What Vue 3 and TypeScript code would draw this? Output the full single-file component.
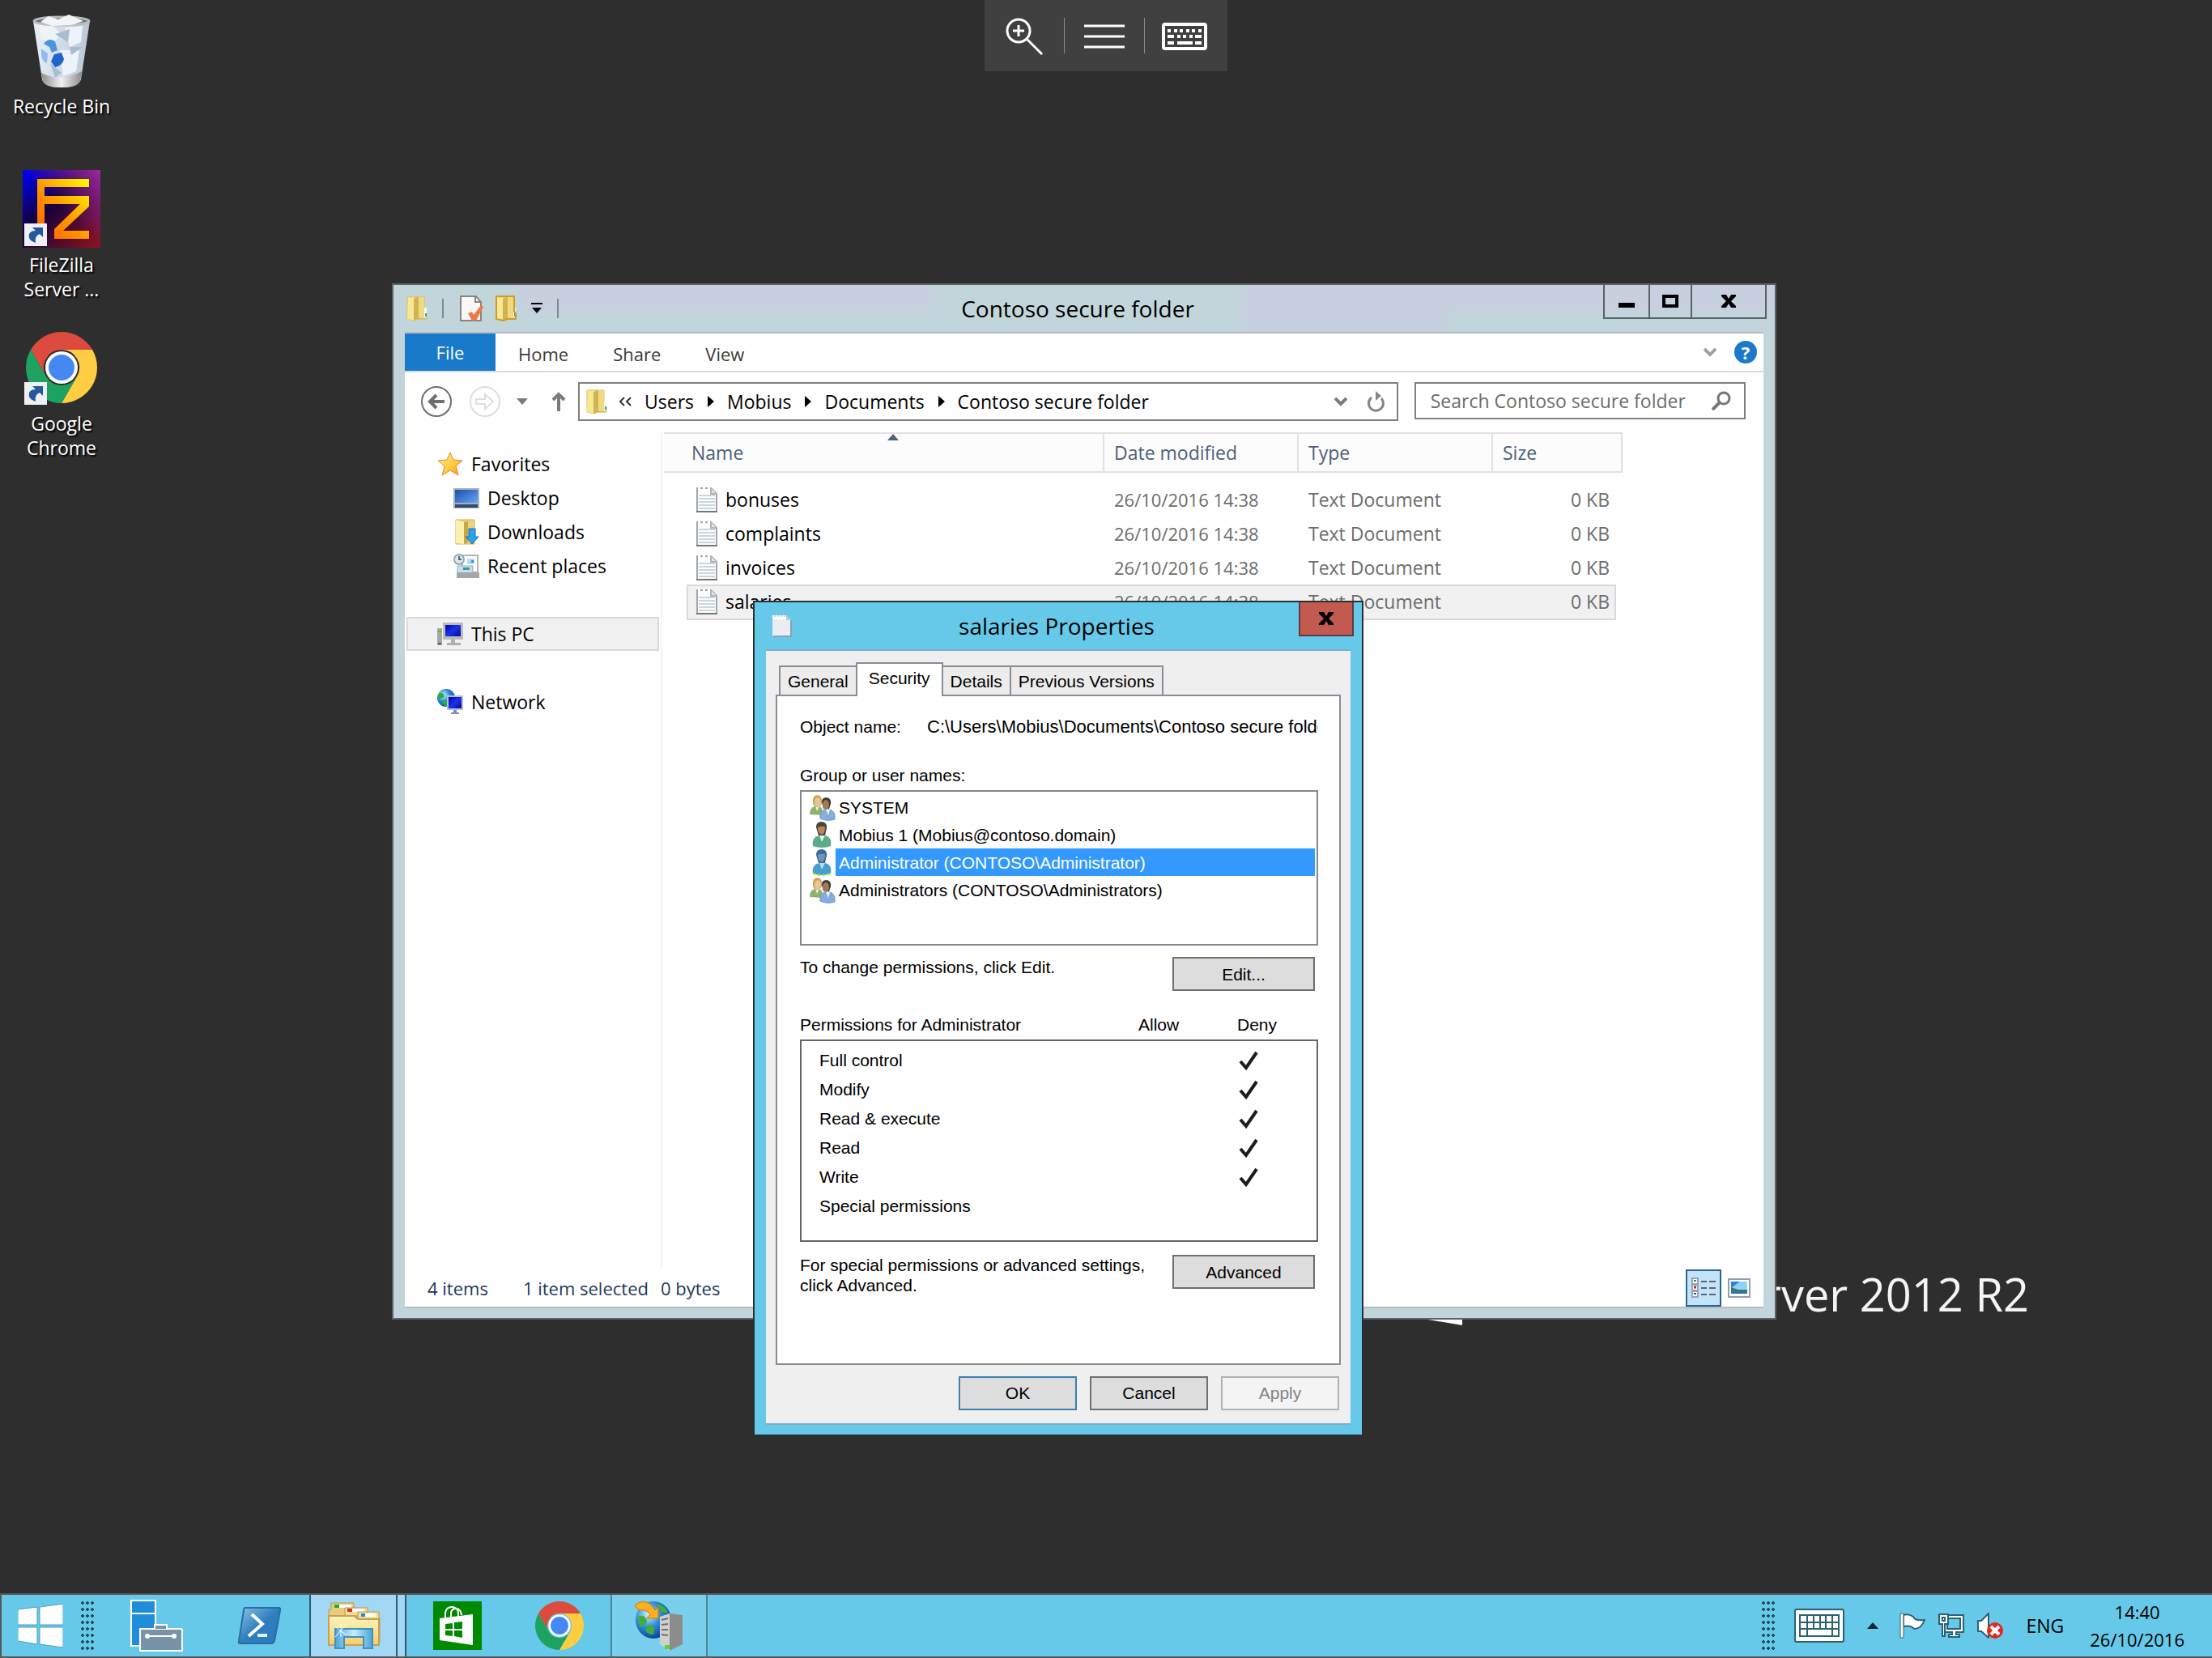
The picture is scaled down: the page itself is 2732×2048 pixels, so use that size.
<script setup lang="ts">
import { ref } from 'vue'

interface Shortcut { icon: string; lines: string[]; link: boolean }
interface NavItem { icon: string; label: string; child?: boolean; gap?: boolean; current?: boolean }
interface FileRow { name: string; date: string; type: string; size: string }
interface Principal { icon: string; name: string }
interface Permission { name: string; deny: boolean }

const shortcuts: Shortcut[] = [
  { icon: 'bin', lines: ['Recycle Bin'], link: false },
  { icon: 'filezilla', lines: ['FileZilla', 'Server ...'], link: true },
  { icon: 'chrome', lines: ['Google', 'Chrome'], link: true },
]

const crumbs = ['Users', 'Mobius', 'Documents', 'Contoso secure folder']

const nav: NavItem[] = [
  { icon: 'star', label: 'Favorites' },
  { icon: 'desktop', label: 'Desktop', child: true },
  { icon: 'downloads', label: 'Downloads', child: true },
  { icon: 'recent', label: 'Recent places', child: true },
  { icon: 'pc', label: 'This PC', gap: true, current: true },
  { icon: 'network', label: 'Network', gap: true },
]

const files: FileRow[] = ['bonuses', 'complaints', 'invoices', 'salaries'].map((name) => ({
  name,
  date: '26/10/2016 14:38',
  type: 'Text Document',
  size: '0 KB',
}))
const selectedFile = ref('salaries')

const tabs = ['General', 'Security', 'Details', 'Previous Versions']
const activeTab = ref('Security')

const principals: Principal[] = [
  { icon: 'group', name: 'SYSTEM' },
  { icon: 'user', name: 'Mobius 1 (Mobius@contoso.domain)' },
  { icon: 'user-selected', name: 'Administrator (CONTOSO\\Administrator)' },
  { icon: 'group', name: 'Administrators (CONTOSO\\Administrators)' },
]
const activePrincipal = ref(2)

const permissions: Permission[] = [
  { name: 'Full control', deny: true },
  { name: 'Modify', deny: true },
  { name: 'Read & execute', deny: true },
  { name: 'Read', deny: true },
  { name: 'Write', deny: true },
  { name: 'Special permissions', deny: false },
]

const objectPath = 'C:\\Users\\Mobius\\Documents\\Contoso secure folder\\salaries.txt'
const query = ref('')
</script>

<template>
  <div class="desktop">
    <svg class="sprite" aria-hidden="true">
      <defs>
        <linearGradient id="g-fold" x1="0" x2="1" y1="0" y2="0">
          <stop offset="0" stop-color="#f3e07c" /><stop offset=".3" stop-color="#fdf3b0" />
          <stop offset=".55" stop-color="#c9ac4b" /><stop offset="1" stop-color="#e6c95c" />
        </linearGradient>
        <linearGradient id="g-fz" x1="0" x2="1" y1="0" y2="1">
          <stop offset="0" stop-color="#0000ff" /><stop offset=".4" stop-color="#12003c" />
          <stop offset="1" stop-color="#8e1420" />
        </linearGradient>
        <linearGradient id="g-fz2" x1="0" x2="1" y1="1" y2="0">
          <stop offset=".5" stop-color="#9a28a0" stop-opacity="0" /><stop offset="1" stop-color="#9a28a0" />
        </linearGradient>
        <linearGradient id="g-fzl" x1="0" x2="1" y1="1" y2="0">
          <stop offset="0" stop-color="#ff5a00" /><stop offset=".5" stop-color="#ff9c00" />
          <stop offset="1" stop-color="#ffff00" />
        </linearGradient>
        <linearGradient id="g-star" x1="0" x2="1" y1="0" y2="1">
          <stop offset="0" stop-color="#fff19a" /><stop offset=".6" stop-color="#ffc93a" />
          <stop offset="1" stop-color="#f08b25" />
        </linearGradient>
        <linearGradient id="g-screen" x1="0" x2="1" y1="0" y2="1">
          <stop offset="0" stop-color="#1f4da5" /><stop offset="1" stop-color="#63a5f7" />
        </linearGradient>
        <linearGradient id="g-blue" x1="0" x2="1" y1="0" y2="1">
          <stop offset="0" stop-color="#0404a8" /><stop offset=".5" stop-color="#1b33e6" />
          <stop offset="1" stop-color="#0606a0" />
        </linearGradient>
        <linearGradient id="g-ps" x1="0" x2="1" y1="0" y2="1">
          <stop offset="0" stop-color="#8fc4e6" /><stop offset=".5" stop-color="#2f7fc0" />
          <stop offset="1" stop-color="#2b78bb" />
        </linearGradient>
        <linearGradient id="g-metal" x1="0" x2="1" y1="0" y2="0">
          <stop offset="0" stop-color="#8d8d8d" /><stop offset=".5" stop-color="#f1f1f1" />
          <stop offset="1" stop-color="#8a8a8a" />
        </linearGradient>
        <linearGradient id="g-bin" x1="0" x2="1" y1="0" y2="0">
          <stop offset="0" stop-color="#e9eef3" /><stop offset=".5" stop-color="#cfdcea" />
          <stop offset="1" stop-color="#b9c6d3" />
        </linearGradient>
        <linearGradient id="g-files" x1="0" x2="0" y1="0" y2="1">
          <stop offset="0" stop-color="#fdf5be" /><stop offset="1" stop-color="#f2cf6b" />
        </linearGradient>
        <linearGradient id="g-stand" x1="0" x2="1" y1="0" y2="0">
          <stop offset="0" stop-color="#4ba4d8" /><stop offset=".5" stop-color="#c9ecfa" />
          <stop offset="1" stop-color="#4ba4d8" />
        </linearGradient>
        <radialGradient id="g-globe" cx=".35" cy=".35" r=".7">
          <stop offset="0" stop-color="#c8f4ff" /><stop offset=".5" stop-color="#2f8ad8" />
          <stop offset="1" stop-color="#0a3c96" />
        </radialGradient>
      </defs>

      <symbol id="i-bin" viewBox="0 0 72 90">
        <path d="M1 8 L12 80 Q14 90 36 90 Q57 90 60 80 L71 8 Z" fill="url(#g-bin)" />
        <path d="M8 14 L20 10 L34 22 L26 38 L10 30 Z M40 16 L62 14 L60 34 L46 40 Z M34 44 L58 44 L54 70 L38 76 Z" fill="#eef3f8" />
        <path d="M28 24 L46 18 L44 34 Z M46 40 L62 40 L48 50 Z M22 60 L36 72 L28 78 Z" fill="#aabccf" />
        <path d="M11 72 Q36 84 61 70 L59 82 Q56 90 36 90 Q16 90 13 82 Z" fill="url(#g-metal)" />
        <ellipse cx="36" cy="8" rx="34" ry="5" fill="#5d6e7e" stroke="#bcbcbc" stroke-width="3" />
        <path d="M10 9 L20 2 L32 6 L45 0 L56 5 L63 8 L48 13 L24 14 Z" fill="#f2f5f8" />
        <path d="M14 36 Q20 28 28 33 L31 44 L24 47 L21 40 Z" fill="#4b93dd" />
        <path d="M27 49 L36 47 L39 55 Q37 63 28 65 L23 58 Z" fill="#1f63cb" />
        <path d="M11 42 L19 48 L18 60 Q12 58 11 50 Z" fill="#8dbdec" />
      </symbol>

      <symbol id="i-filezilla" viewBox="0 0 96 96">
        <path d="M0 0 H96 V96 H0 Z" fill="url(#g-fz)" />
        <path d="M0 0 H96 V96 H0 Z" fill="url(#g-fz2)" />
        <path d="M18 84 V11 H82 V21 H27 V32 H82 V45 L50 75 H82 V85 H39 V73 L71 42 H27 V84 Z" fill="url(#g-fzl)" />
      </symbol>

      <symbol id="i-chrome" viewBox="2 2 44 44">
        <path d="M4.95 13 A22 22 0 0 1 43.05 13 L24 13 A11 11 0 0 0 14.47 29.5 Z" fill="#dc4b3e" />
        <path d="M43.05 13 A22 22 0 0 1 24 46 L33.53 29.5 A11 11 0 0 0 24 13 Z" fill="#ffcd42" />
        <path d="M24 46 A22 22 0 0 1 4.95 13 L14.47 29.5 A11 11 0 0 0 33.53 29.5 Z" fill="#1da260" />
        <circle cx="24" cy="24" r="10" fill="#fff" />
        <circle cx="24" cy="24" r="8" fill="#4688f1" />
      </symbol>

      <symbol id="i-link" viewBox="0 0 28 28">
        <path d="M0 0 H28 V28 H0 Z" fill="#eef0f5" />
        <path d="M10 5 H23 V17 L19 13 Q12 16 14 24 Q4 21 6 13 Q8 9 14 9 Z" fill="#24589c" />
      </symbol>

      <symbol id="i-folder" viewBox="0 0 26 32">
        <path d="M2 2 H22 V20 L25 22 V29 H14 L10 31 L1 29 V2 Z" fill="url(#g-fold)" stroke="#d9b84c" stroke-width="1" />
        <path d="M2 2 L9 4 V31 L1 29 Z" fill="#f7e98f" />
        <path d="M9 4 L15 3 V27 L9 31 Z" fill="#cfb355" />
        <path d="M15 2 H22 V20 L24 22 V28 H15 Z" fill="#f0da80" />
        <path d="M22 15 H25 V27 H22 Z" fill="#f6f9e8" />
        <path d="M23 22 H25 V26 H23 Z" fill="#2aa4dc" />
      </symbol>

      <symbol id="i-folder-new" viewBox="0 0 26 32">
        <use href="#i-folder" />
        <path d="M1 1 H23 V20 L25 22 V29 H14 L10 31 L1 29 Z" fill="none" stroke="#d29a2a" stroke-width="2" />
      </symbol>

      <symbol id="i-props" viewBox="0 0 30 32">
        <path d="M1 1 H20 L26 8 V31 H1 Z" fill="#f8f8f8" stroke="#858585" stroke-width="2" />
        <path d="M19 2 V8 H26" fill="none" stroke="#858585" stroke-width="2" />
        <path d="M10 22 L15 20 L17 24 L26 12 L29 14 L20 31 H15 Z" fill="#ee7745" />
      </symbol>

      <symbol id="i-star" viewBox="0 0 32 32">
        <path d="M16 2 L20 11 L31 12 L23 19 L26 30 L16 24 L6 30 L9 19 L1 12 L12 11 Z" fill="url(#g-star)" stroke="#e8892b" stroke-width="1" />
      </symbol>

      <symbol id="i-desktop" viewBox="0 0 32 32">
        <path d="M0 4 H32 V29 H0 Z" fill="#9fb2c8" />
        <path d="M2 6 H30 V22 H2 Z" fill="url(#g-screen)" />
        <path d="M2 24 H30 V28 H2 Z" fill="#33496a" />
      </symbol>

      <symbol id="i-downloads" viewBox="0 0 32 32">
        <path d="M3 1 H26 V31 H3 Z" fill="#ecd37a" stroke="#d3b055" stroke-width="1" />
        <path d="M3 1 L13 4 V31 L3 30 Z" fill="#fbf0ae" />
        <path d="M13 4 L18 3 V29 L13 31 Z" fill="#c8a649" />
        <path d="M19 12 H27 V22 H31 L23 31 L15 22 H19 Z" fill="#2ba3e8" stroke="#1471b8" stroke-width="1" />
      </symbol>

      <symbol id="i-recent" viewBox="0 0 32 32">
        <path d="M11 3 H30 V24 H11 Z" fill="#fff" stroke="#b4b4b4" stroke-width="2" />
        <path d="M17 7 H26 V14 H17 Z" fill="#b9dcf6" />
        <path d="M22 9 H25 V12 H22 Z" fill="#2c8fe2" />
        <path d="M5 16 H24 V25 H5 Z" fill="#bfe2ee" stroke="#9aaab2" stroke-width="1" />
        <path d="M12 18 H20 V21 H12 Z" fill="#3d9a86" />
        <path d="M4 24 H32 V31 H4 Z" fill="#a6a6a6" />
        <circle cx="7" cy="8" r="6" fill="#dfe8ee" stroke="#9aa6ae" stroke-width="2" />
        <path d="M7 4 V8 H10" fill="none" stroke="#4c6b84" stroke-width="2" />
      </symbol>

      <symbol id="i-pc" viewBox="0 0 32 32">
        <path d="M7 2 H32 V23 H7 Z" fill="#bdbdb8" />
        <path d="M10 5 H29 V19 H10 Z" fill="url(#g-blue)" />
        <path d="M17 23 H22 V27 H29 V30 H12 V27 H17 Z" fill="#b0b0ae" />
        <path d="M0 9 H6 V30 H0 Z" fill="#a8a8a4" />
        <path d="M1 12 H5 V14 H1 Z" fill="#35d213" />
        <path d="M1 27 H5 V29 H1 Z" fill="#555" />
      </symbol>

      <symbol id="i-network" viewBox="0 0 32 32">
        <circle cx="11" cy="11" r="11" fill="url(#g-globe)" />
        <path d="M2 6 Q8 3 9 10 Q4 12 1 12 Z M6 14 Q14 13 12 22 Q6 20 6 14 Z" fill="#1fb33b" />
        <path d="M12 8 H32 V26 H12 Z" fill="#b4c0dc" />
        <path d="M14 10 H30 V24 H14 Z" fill="url(#g-blue)" />
        <path d="M20 26 H24 V29 H27 V31 H17 V29 H20 Z" fill="#7f8fae" />
      </symbol>

      <symbol id="i-text" viewBox="0 0 26 32">
        <path d="M1 2 H18 L25 9 V31 H1 Z" fill="#fdfdfd" stroke="#a6a6a6" stroke-width="2" />
        <path d="M2 2 H18" stroke="#fff" stroke-width="3" stroke-dasharray="3 3" />
        <path d="M18 2 V9 H25" fill="#e4e4e4" stroke="#b4b4b4" stroke-width="2" />
        <path d="M3 11 H23 M3 15 H23 M3 19 H23 M3 23 H23 M3 27 H23" stroke="#c6d6e3" stroke-width="2" />
        <path d="M0 31 H26" stroke="#777" stroke-width="2" />
      </symbol>

      <symbol id="i-blank" viewBox="0 0 24 30">
        <path d="M0 2 H17 L23 8 V28 H0 Z" fill="#e9eef2" />
        <path d="M0 2 H17 V7 H0 Z" fill="#fff" />
        <path d="M3 1 V4 M7 1 V4 M11 1 V4 M15 1 V4" stroke="#9db4c0" stroke-width="1" />
        <path d="M1 28 H23 V8" fill="none" stroke="#8aa3b1" stroke-width="2" />
        <path d="M17 2 V8 H23 Z" fill="#b8c6cf" />
      </symbol>

      <symbol id="i-group" viewBox="0 0 32 34">
        <path d="M0 26 Q0 17 7 16 H12 Q17 18 16 27 Z" fill="#8bb56a" />
        <path d="M7 16 L9 22 L12 16 Z" fill="#e9f3dc" />
        <path d="M4 12 Q3 2 10 2 Q16 3 15 12 Q14 17 9 17 Q5 17 4 12 Z" fill="#c9a556" />
        <ellipse cx="10" cy="11" rx="4" ry="6" fill="#e8c299" />
        <path d="M15 11 Q15 5 21 5 Q27 6 26 13 L24 19 H17 Z" fill="#3d3a38" />
        <ellipse cx="20" cy="14" rx="4" ry="6" fill="#a87650" />
        <path d="M13 31 Q12 21 20 20 H25 Q32 22 31 32 Q22 35 13 31 Z" fill="#85aede" stroke="#6d94c4" stroke-width="1" />
        <path d="M20 20 L23 27 L25 20 Z" fill="#e8f0fb" />
      </symbol>

      <symbol id="i-user" viewBox="0 0 32 34">
        <path d="M4 31 Q2 20 12 18 H19 Q28 20 26 31 Q15 35 4 31 Z" fill="#5aab86" />
        <path d="M12 18 L15 26 L19 18 Z" fill="#e6f2ea" />
        <path d="M8 8 Q8 1 15 1 Q22 2 21 9 L19 18 H11 Z" fill="#4a4340" />
        <path d="M10 8 Q14 6 19 7 Q19 16 15 17 Q10 16 10 8 Z" fill="#b98457" />
      </symbol>

      <symbol id="i-user-selected" viewBox="0 0 32 34">
        <path d="M4 31 Q2 20 12 18 H19 Q28 20 26 31 Q15 35 4 31 Z" fill="#479fcd" />
        <path d="M12 18 L15 26 L19 18 Z" fill="#b9dcf5" />
        <path d="M8 8 Q8 1 15 1 Q22 2 21 9 L19 18 H11 Z" fill="#376aa9" />
        <path d="M10 8 Q14 6 19 7 Q19 16 15 17 Q10 16 10 8 Z" fill="#7593ad" />
        <path d="M4 31 Q15 35 26 31" fill="none" stroke="#b4e61c" stroke-width="2" stroke-dasharray="3 3" />
      </symbol>

      <symbol id="i-check" viewBox="0 0 24 24">
        <path d="M2 13 L9 21 L22 2" fill="none" stroke="#1c1c1c" stroke-width="4" />
      </symbol>

      <symbol id="i-x" viewBox="0 0 20 16">
        <path d="M1 0 H7 L10 5 L13 0 H19 V2 L13 8 L19 14 V16 H13 L10 11 L7 16 H1 V14 L7 8 L1 2 Z" fill="#000" />
      </symbol>
    </svg>

    <main class="workspace">
      <div class="wallpaper">
        <svg class="flag" viewBox="0 0 44 8" aria-hidden="true"><path d="M0 0 H42 V7 Z" fill="#fff" /></svg>
        <span>Windows Server 2012 R2</span>
      </div>

      <nav class="shortcuts" aria-label="Desktop">
        <a v-for="s in shortcuts" :key="s.icon" href="#" class="shortcut" :class="s.icon">
          <span class="picture">
            <svg class="art"><use :href="'#i-' + s.icon" /></svg>
            <svg v-if="s.link" class="badge"><use href="#i-link" /></svg>
          </span>
          <span v-for="line in s.lines" :key="line" class="caption">{{ line }}</span>
        </a>
      </nav>

      <div class="session-bar">
        <button type="button" aria-label="Zoom">
          <svg width="48" height="48" viewBox="0 0 48 48" fill="none" stroke="#fff" stroke-width="3">
            <circle cx="17" cy="17" r="14" />
            <path d="M10 17 H24 M17 10 V24" />
            <path d="M27 27 L46 46" />
          </svg>
        </button>
        <button type="button" aria-label="Menu">
          <svg width="50" height="30" viewBox="0 0 50 30" stroke="#fff" stroke-width="3">
            <path d="M0 2 H50 M0 15 H50 M0 28 H50" />
          </svg>
        </button>
        <button type="button" aria-label="Keyboard">
          <svg width="56" height="34" viewBox="0 0 56 34">
            <rect x="2" y="2" width="52" height="30" rx="2" fill="none" stroke="#fff" stroke-width="4" />
            <path d="M7 10 H11 M15 10 H19 M22 10 H26 M30 10 H34 M37 10 H41 M45 10 H49" stroke="#fff" stroke-width="4" />
            <path d="M7 17 H15 M19 17 H23 M26 17 H30 M34 17 H38 M41 17 H49 M7 25 H15 M19 25 H38 M41 25 H49" stroke="#fff" stroke-width="4" />
          </svg>
        </button>
      </div>

      <section class="explorer" aria-label="Contoso secure folder">
        <header class="ex-title">
          <div class="quick">
            <svg width="26" height="32"><use href="#i-folder" /></svg>
            <i class="rule"></i>
            <svg width="30" height="32"><use href="#i-props" /></svg>
            <svg width="26" height="32"><use href="#i-folder-new" /></svg>
            <svg class="more" width="14" height="14" viewBox="0 0 14 14"><path d="M0 1 H14" stroke="#000" stroke-width="2" /><path d="M1 6 H13 L7 13 Z" /></svg>
            <i class="rule"></i>
          </div>
          <h1>Contoso secure folder</h1>
          <div class="controls">
            <button type="button" aria-label="Minimize"><svg width="20" height="16"><path d="M0 10 H20 V16 H0 Z" /></svg></button>
            <button type="button" aria-label="Maximize"><svg width="20" height="16"><path d="M0 0 H20 V16 H0 Z M4 4 V12 H16 V4 Z" fill-rule="evenodd" /></svg></button>
            <button type="button" aria-label="Close"><svg width="20" height="16"><use href="#i-x" /></svg></button>
          </div>
        </header>

        <div class="client">
          <div class="ribbon">
            <button type="button" class="file">File</button>
            <button type="button">Home</button>
            <button type="button">Share</button>
            <button type="button">View</button>
            <svg class="expand" width="16" height="12" viewBox="0 0 16 12"><path d="M1 2 L8 9 L15 2" fill="none" stroke="#a0a0a0" stroke-width="4" /></svg>
            <button type="button" class="help" aria-label="Help">?</button>
          </div>

          <div class="address">
            <svg class="back" width="40" height="40" viewBox="0 0 40 40" fill="none" stroke="#6f6f6f">
              <circle cx="20" cy="20" r="18" stroke-width="2" />
              <path d="M30 20 H12 M20 12 L12 20 L20 28" stroke-width="4" />
            </svg>
            <svg class="forward" width="40" height="40" viewBox="0 0 40 40" fill="none" stroke="#dedede" stroke-width="2">
              <circle cx="20" cy="20" r="18" />
              <path d="M9 17 H20 V11 L30 20 L20 29 V23 H9 Z" />
            </svg>
            <svg class="history" width="14" height="8"><path d="M0 0 H14 L7 8 Z" fill="#7a7a7a" /></svg>
            <svg class="up" width="18" height="26" viewBox="0 0 18 26" fill="none" stroke="#7a7a7a" stroke-width="4"><path d="M9 25 V4 M2 11 L9 4 L16 11" /></svg>
            <div class="path">
              <svg width="26" height="32"><use href="#i-folder" /></svg>
              <svg class="chevrons" width="16" height="12" viewBox="0 0 16 12" fill="none" stroke="#333" stroke-width="2"><path d="M7 1 L2 6 L7 11 M15 1 L10 6 L15 11" /></svg>
              <template v-for="(c, i) in crumbs" :key="c">
                <svg v-if="i > 0" width="8" height="14"><path d="M0 0 L8 7 L0 14 Z" /></svg>
                <a href="#">{{ c }}</a>
              </template>
              <svg class="drop" width="16" height="12" viewBox="0 0 16 12"><path d="M1 2 L8 9 L15 2" fill="none" stroke="#7a7a7a" stroke-width="4" /></svg>
              <svg class="refresh" width="22" height="26" viewBox="0 0 22 26"><path d="M5 8 A9 9 0 1 0 17 9" fill="none" stroke="#858585" stroke-width="3" /><path d="M10 0 V12 L17 6 Z" fill="#858585" /></svg>
            </div>
            <label class="search">
              <input v-model="query" type="text" placeholder="Search Contoso secure folder" aria-label="Search Contoso secure folder" />
              <svg width="24" height="24" viewBox="0 0 24 24" fill="none" stroke="#757575"><circle cx="15" cy="9" r="7" stroke-width="3" /><path d="M10 14 L1 23" stroke-width="4" /></svg>
            </label>
          </div>

          <div class="panes">
            <nav class="tree" aria-label="Navigation">
              <a v-for="n in nav" :key="n.label" href="#" :class="{ child: n.child, gap: n.gap, current: n.current }">
                <svg width="32" height="32"><use :href="'#i-' + n.icon" /></svg>{{ n.label }}
              </a>
            </nav>

            <table class="files">
              <thead>
                <tr>
                  <th class="name">Name<svg class="sort" width="14" height="8"><path d="M0 8 L7 0 L14 8 Z" fill="#4c607a" /></svg></th>
                  <th class="date">Date modified</th>
                  <th class="type">Type</th>
                  <th class="size">Size</th>
                </tr>
              </thead>
              <tbody>
                <tr v-for="f in files" :key="f.name" :class="{ selected: f.name === selectedFile }" @click="selectedFile = f.name">
                  <td class="name"><div><svg width="26" height="32"><use href="#i-text" /></svg>{{ f.name }}</div></td>
                  <td class="date"><div>{{ f.date }}</div></td>
                  <td class="type"><div>{{ f.type }}</div></td>
                  <td class="size"><div>{{ f.size }}</div></td>
                </tr>
              </tbody>
            </table>
          </div>

          <footer class="status">
            <span class="count">4 items</span>
            <span>1 item selected</span>
            <span>0 bytes</span>
            <button type="button" class="view on" aria-label="Details view">
              <svg width="30" height="26" viewBox="0 0 30 26">
                <path d="M1 1 H8 V8 H1 Z M1 9 H8 V16 H1 Z M1 17 H8 V24 H1 Z" fill="#fff" stroke="#98a4b4" stroke-width="2" />
                <path d="M3 4 H6" stroke="#3b8a4a" stroke-width="2" /><path d="M3 12 H6" stroke="#c22" stroke-width="3" /><path d="M3 20 H6" stroke="#2457c5" stroke-width="2" />
                <path d="M12 5 H19 M22 5 H30 M12 13 H19 M22 13 H30 M12 21 H19 M22 21 H30" stroke="#56657a" stroke-width="2" />
              </svg>
            </button>
            <button type="button" class="view" aria-label="Thumbnail view">
              <svg width="28" height="24" viewBox="0 0 28 24">
                <path d="M1 1 H27 V23 H1 Z" fill="#fff" stroke="#8fa0b4" stroke-width="2" />
                <path d="M4 4 H24 V19 H4 Z" fill="#8fd4f4" />
                <path d="M4 4 H15 L4 12 Z" fill="#2e80d8" />
                <path d="M4 11 L13 14 H24 V16 H4 Z" fill="#3b8060" />
                <path d="M4 16 H24 V19 H4 Z" fill="#2c72b8" />
              </svg>
            </button>
          </footer>
        </div>
      </section>

      <section class="dialog" role="dialog" aria-label="salaries Properties">
        <header class="dl-title">
          <svg width="24" height="30"><use href="#i-blank" /></svg>
          <h2>salaries Properties</h2>
          <button type="button" class="close" aria-label="Close"><svg width="20" height="16"><use href="#i-x" /></svg></button>
        </header>
        <div class="dl-body">
          <div class="tabs" role="tablist">
            <button v-for="t in tabs" :key="t" type="button" role="tab" :aria-selected="t === activeTab" :class="{ active: t === activeTab }" @click="activeTab = t">{{ t }}</button>
          </div>
          <div class="pane">
            <div class="object">
              <label for="object-name">Object name:</label>
              <input id="object-name" type="text" readonly :value="objectPath" />
            </div>
            <p class="caption-group" id="principals-label">Group or user names:</p>
            <ul class="principals" aria-labelledby="principals-label">
              <li v-for="(p, i) in principals" :key="p.name" :class="{ active: i === activePrincipal }" @click="activePrincipal = i">
                <svg width="32" height="34"><use :href="'#i-' + p.icon" /></svg><span>{{ p.name }}</span>
              </li>
            </ul>
            <div class="action edit">
              <p>To change permissions, click Edit.</p>
              <button type="button" class="push wide">Edit...</button>
            </div>
            <div class="perm-head">
              <span>Permissions for Administrator</span><span class="col">Allow</span><span class="col">Deny</span>
            </div>
            <div class="perm-box">
              <table>
                <tbody>
                  <tr v-for="p in permissions" :key="p.name">
                    <th scope="row">{{ p.name }}</th>
                    <td></td>
                    <td><svg v-if="p.deny" width="24" height="24" role="img" aria-label="Denied"><use href="#i-check" /></svg></td>
                  </tr>
                </tbody>
              </table>
            </div>
            <div class="action">
              <p>For special permissions or advanced settings,<br />click Advanced.</p>
              <button type="button" class="push wide">Advanced</button>
            </div>
          </div>
          <div class="buttons">
            <button type="button" class="push default">OK</button>
            <button type="button" class="push">Cancel</button>
            <button type="button" class="push" disabled>Apply</button>
          </div>
        </div>
      </section>
    </main>

    <footer class="taskbar">
      <button type="button" class="start" aria-label="Start">
        <svg width="56" height="56" viewBox="0 0 56 56"><path d="M0 8 L24 5 V27 H0 Z M27 5 L56 1 V27 H27 Z M0 30 H24 V51 L0 47 Z M27 30 H56 V55 L27 51 Z" fill="#fff" stroke="#4b9fc0" stroke-width="1" /></svg>
      </button>
      <i class="grip"></i>
      <button type="button" class="server" aria-label="Server Manager">
        <svg width="66" height="64" viewBox="0 0 66 64">
          <path d="M1 1 H31 V57 H1 Z" fill="#1f8ddb" stroke="#fff" stroke-width="2" /><path d="M1 17 H31" stroke="#fff" stroke-width="2" />
          <path d="M12 36 H62 Q64 36 64 38 V63 H12 Z" fill="#7893a8" stroke="#fff" stroke-width="2" />
          <path d="M30 36 V31 H45 V36" fill="#7893a8" stroke="#fff" stroke-width="2" />
          <path d="M20 45 H54" stroke="#fff" stroke-width="2" /><circle cx="21" cy="45" r="3" fill="#fff" /><circle cx="54" cy="45" r="3" fill="#fff" />
        </svg>
      </button>
      <button type="button" class="shell" aria-label="PowerShell">
        <svg width="56" height="48" viewBox="0 0 56 48">
          <path d="M10 2 H51 Q54 2 53 5 L46 43 Q45 46 42 46 H4 Q1 46 2 43 L8 5 Q8 2 10 2 Z" fill="url(#g-ps)" stroke="#2b6d9c" stroke-width="2" />
          <path d="M18 10 L31 22 L14 37" fill="none" stroke="#fff" stroke-width="4" /><path d="M25 36 H37" stroke="#e3f0f8" stroke-width="4" />
        </svg>
      </button>
      <button type="button" class="running" aria-label="File Explorer">
        <svg width="66" height="60" viewBox="0 0 66 60">
          <path d="M5 2 H33 V14 H60 V20 H65 V50 H2 V10 H5 Z" fill="#e8cc80" stroke="#b8964a" stroke-width="1" />
          <path d="M9 4 H15 V8 H9 Z" fill="#1db41d" /><path d="M15 4 H30 V8 H15 Z" fill="#fff" />
          <path d="M22 8 H50 V18 H22 Z" fill="#f5dd95" stroke="#b8964a" stroke-width="1" />
          <path d="M25 9 H31 V13 H25 Z" fill="#c8331e" /><path d="M31 9 H46 V13 H31 Z" fill="#fff" />
          <path d="M38 13 H64 V22 H38 Z" fill="#f5dd95" stroke="#b8964a" stroke-width="1" />
          <path d="M47 15 H60 V19 H47 Z" fill="#fff" /><path d="M42 15 H47 V19 H42 Z" fill="#1c8fe0" />
          <path d="M2 18 H34 L38 22 H64 V54 H2 Z" fill="url(#g-files)" stroke="#c8a04c" stroke-width="2" />
          <path d="M10 34 H56 V58 H45 V44 H21 V58 H10 Z" fill="url(#g-stand)" stroke="#3b92c4" stroke-width="2" />
          <path d="M17 28 V44 M11 32 L24 42 M24 28 L10 44" stroke="#fff" stroke-width="1" />
        </svg>
      </button>
      <i class="stack"></i>
      <button type="button" class="app" aria-label="Store">
        <svg width="60" height="60" viewBox="0 0 60 60">
          <path d="M0 0 H60 V60 H0 Z" fill="#008a00" />
          <path d="M15 20 V14 Q16 7 23 7 Q30 7 31 14 V20 M22 20 V14 Q23 9 28 9 Q34 9 35 17" fill="none" stroke="#fff" stroke-width="2" />
          <path d="M8 21 L49 16 V54 L8 48 Z" fill="#fff" />
          <path d="M15 28 L24 27 V34 H15 Z M26 26 L36 25 V34 H26 Z M15 36 H24 V43 L15 42 Z M26 36 H36 V45 L26 43 Z" fill="#008a00" />
        </svg>
      </button>
      <button type="button" class="app" aria-label="Google Chrome"><svg width="60" height="60"><use href="#i-chrome" /></svg></button>
      <button type="button" class="open" aria-label="Server console">
        <svg width="62" height="62" viewBox="0 0 62 62">
          <ellipse cx="24" cy="24" rx="22" ry="23" fill="url(#g-globe)" />
          <path d="M5 20 Q14 16 16 26 Q12 34 7 32 Z M18 30 Q28 30 24 42 Q16 42 14 36 Z M28 4 Q40 6 42 16 L34 14 Z" fill="#3fae3a" />
          <path d="M1 6 Q10 -2 20 4 L26 12 L30 8 V22 H16 L20 17 Q14 10 8 12 Q4 12 1 6 Z" fill="#ffae1c" stroke="#c87a10" stroke-width="1" />
          <path d="M32 20 L44 16 V62 L32 54 Z" fill="#d0d0d0" /><path d="M44 16 L60 18 V54 L44 62 Z" fill="#8c8c8c" />
          <path d="M34 24 L42 22 M34 30 L42 29 M34 36 L42 36 M34 42 L42 43" stroke="#6f6f6f" stroke-width="2" />
          <path d="M38 55 H44 V60 H38 Z" fill="#5bd91e" />
        </svg>
      </button>

      <div class="tray">
        <i class="grip"></i>
        <svg class="keys" width="62" height="42" viewBox="0 0 62 42">
          <rect x="1" y="1" width="60" height="40" rx="2" fill="#fff" stroke="#2b6272" stroke-width="2" />
          <path d="M7 8 H55 V34 H7 Z M7 17 H55 M7 25 H55 M16 8 V34 M24 8 V25 M32 8 V25 M39 8 V25 M47 8 V34" fill="none" stroke="#2b6272" stroke-width="2" />
        </svg>
        <svg class="reveal" width="14" height="8"><path d="M0 8 L7 0 L14 8 Z" fill="#10232b" /></svg>
        <svg class="status-icon" width="32" height="32" viewBox="0 0 32 32" stroke="#2b6272" stroke-width="2">
          <path d="M5 3 Q11 1 17 5 Q18 10 31 9 Q27 20 18 20 Q14 15 5 17 Z" fill="#fff" /><path d="M1 1 H5 V31 H1 Z" fill="#fff" stroke-width="1" />
        </svg>
        <svg class="status-icon" width="32" height="32" viewBox="0 0 32 32" fill="#fff" stroke="#2b6272" stroke-width="2">
          <path d="M8 3 H31 V24 H22 V27 H26 V30 H13 V27 H17 V24 H8 Z" /><path d="M11 7 H27 V20 H11 Z" fill="#66c9ea" />
          <path d="M1 2 H12 V14 H8 V29 H5 V14 H1 Z" /><path d="M5 6 H8 V10 H5 Z" />
        </svg>
        <svg class="status-icon" width="32" height="32" viewBox="0 0 32 32">
          <path d="M1 10 H5 L14 1 V31 L5 23 H1 Z" fill="#fff" stroke="#2b6272" stroke-width="2" />
          <circle cx="22" cy="22" r="10" fill="#e0281c" /><path d="M17 17 L27 27 M27 17 L17 27" stroke="#fff" stroke-width="4" />
        </svg>
        <span class="lang">ENG</span>
        <time class="clock"><span>14:40</span><span>26/10/2016</span></time>
      </div>
    </footer>
  </div>
</template>

<style>
body {
  margin: 0;
  background: #2e2e2e;
}
</style>

<style scoped>
* {
  box-sizing: border-box;
}
button,
input {
  margin: 0;
  padding: 0;
  border: 0;
  border-radius: 0;
  background: none;
  font: inherit;
  color: inherit;
}
a {
  color: inherit;
  text-decoration: none;
}
h1,
h2,
p,
ul {
  margin: 0;
  padding: 0;
  font-weight: 400;
  list-style: none;
}
svg {
  display: block;
  flex: none;
}
.sprite {
  position: absolute;
  width: 0;
  height: 0;
}
.desktop {
  display: flex;
  flex-direction: column;
  min-height: 100vh;
  background: #2e2e2e;
  color: #000;
  font-family: "Open Sans", "Noto Sans", sans-serif;
  font-size: 23px;
  line-height: 30px;
}
.workspace {
  position: relative;
  flex: 1;
  min-height: 1800px;
}

.wallpaper {
  position: absolute;
  top: 1554px;
  right: 226px;
  color: #f4f4f4;
  font-size: 56px;
  line-height: 88px;
  white-space: nowrap;
}
.flag {
  position: absolute;
  top: 76px;
  right: 698px;
  width: 44px;
  height: 8px;
}

.shortcuts {
  display: flex;
  flex-direction: column;
  gap: 34px;
  width: 152px;
  padding-top: 18px;
  color: #fff;
  text-align: center;
  text-shadow: 2px 2px 2px #000;
}
.shortcut {
  display: flex;
  flex-direction: column;
  align-items: center;
}
.picture {
  position: relative;
  display: flex;
  justify-content: center;
  width: 96px;
  height: 96px;
  margin-bottom: 6px;
}
.art {
  width: 96px;
  height: 96px;
}
.bin .art {
  width: 72px;
  height: 90px;
}
.bin .picture {
  margin-bottom: 2px;
}
.bin {
  margin-bottom: 30px;
}
.chrome .art {
  width: 88px;
  height: 88px;
  margin-top: 4px;
}
.badge {
  position: absolute;
  left: 2px;
  bottom: 2px;
  width: 28px;
  height: 28px;
}

.session-bar {
  position: absolute;
  top: 0;
  left: 50%;
  display: flex;
  align-items: center;
  width: 300px;
  height: 88px;
  margin-left: -150px;
  background: #404040;
}
.session-bar button {
  display: flex;
  flex: 1;
  align-items: center;
  justify-content: center;
  height: 44px;
  padding-top: 2px;
  border-left: 1px solid #8c8c8c;
}
.session-bar button:first-child {
  border-left: 0;
}
.session-bar button:last-child {
  padding-right: 4px;
}

.explorer {
  position: absolute;
  top: 350px;
  left: 484px;
  right: 538px;
  display: flex;
  flex-direction: column;
  border: 2px solid #5e6166;
  background:
    linear-gradient(#c6d0df, #c6d0df) 154px 0 / 512px 32px no-repeat,
    linear-gradient(#c6d0df, #c6d0df) 1050px 0 / 254px 58px no-repeat,
    linear-gradient(#c6d0df, #c6d0df) 1304px 0 / 402px 32px no-repeat,
    #c2d5da;
}
.ex-title {
  display: grid;
  grid-template-columns: 1fr auto 1fr;
  align-items: center;
  height: 58px;
}
.quick {
  display: flex;
  align-items: center;
  padding-left: 16px;
}
.rule {
  width: 2px;
  height: 24px;
  margin: 0 20px 0 18px;
  background: #7f8a90;
}
.quick svg + svg {
  margin-left: 14px;
}
.quick svg.more {
  margin-left: 18px;
}
.ex-title h1,
.dl-title h2 {
  padding-right: 16px;
  font-size: 28px;
  line-height: 38px;
}
.controls {
  display: flex;
  align-self: start;
  justify-self: end;
  height: 42px;
  margin-right: 10px;
  border: solid #5b6068;
  border-width: 0 2px 2px 0;
}
.controls button {
  display: flex;
  align-items: center;
  justify-content: center;
  width: 56px;
  border-left: 2px solid #5b6068;
}
.controls button:nth-child(2) {
  width: 52px;
}
.controls button:last-child {
  width: 92px;
}

.client {
  display: flex;
  flex-direction: column;
  margin: 0 14px 12px;
  border: solid #b4bcc0;
  border-width: 2px 0;
  background: #fff;
}
.ribbon {
  display: flex;
  align-items: center;
  height: 48px;
  border-bottom: 2px solid #dcdcdc;
  color: #3b3b3b;
  font-size: 22px;
}
.ribbon button {
  height: 46px;
  padding-top: 4px;
  margin-left: 55px;
}
.ribbon button.file {
  width: 112px;
  margin-left: 0;
  margin-right: -27px;
  padding: 0;
  background: #1979ca;
  color: #fff;
}
.expand {
  margin-left: auto;
}
.ribbon button.help {
  width: 28px;
  height: 28px;
  margin: 0 8px 0 22px;
  padding: 0;
  border-radius: 50%;
  background: #1979ca;
  color: #fff;
  font-weight: 700;
  line-height: 28px;
}
.address {
  display: flex;
  align-items: center;
  height: 74px;
  padding: 0 22px 2px 19px;
}
.forward {
  margin-left: 20px;
}
.history {
  margin-left: 19px;
}
.up {
  margin: 0 15px 0 29px;
}
.path {
  display: flex;
  flex: 1;
  align-items: center;
  height: 48px;
  padding: 0 14px 0 8px;
  border: 2px solid #7f7f7f;
}
.path a {
  margin: 0 17px 0 16px;
  white-space: nowrap;
}
.path .chevrons {
  margin-left: 14px;
}
.path .drop {
  margin-left: auto;
}
.path .refresh {
  margin-left: 25px;
}
.search {
  display: flex;
  flex: none;
  align-items: center;
  width: 25%;
  height: 46px;
  margin: 0 0 2px 20px;
  padding: 0 16px 0 18px;
  border: 2px solid #7f7f7f;
}
.search input {
  flex: 1;
  min-width: 0;
  outline: 0;
}
.search input::placeholder {
  color: #6d6d6d;
  opacity: 1;
}

.panes {
  display: flex;
  min-height: 1034px;
}
.tree {
  display: flex;
  flex: none;
  flex-direction: column;
  width: 318px;
  padding: 18px 2px 0 2px;
  border-right: 2px solid #f5f5f5;
}
.tree a {
  display: flex;
  align-items: center;
  gap: 10px;
  height: 42px;
  padding-left: 36px;
  border: 2px solid transparent;
}
.tree a.child {
  padding-left: 56px;
}
.tree a.gap {
  margin-top: 42px;
}
.tree a.current {
  border-color: #d9d9d9;
  background: #f1f1f1;
}
.files {
  align-self: flex-start;
  width: 1184px;
  margin-left: 2px;
  border-spacing: 0;
  table-layout: fixed;
}
.files th {
  position: relative;
  height: 50px;
  padding: 0 0 0 12px;
  border: solid #e1e1e1;
  border-width: 2px 2px 2px 0;
  background: #fcfcfc;
  color: #4c607a;
  font-weight: 400;
  text-align: left;
}
.files th.name {
  width: 544px;
  padding-left: 34px;
}
.files th.date,
.files th.type {
  width: 240px;
}
.files th.size {
  width: 160px;
}
.sort {
  position: absolute;
  top: 0;
  left: 276px;
}
.files tbody::before {
  display: block;
  height: 12px;
  content: "";
}
.files td {
  padding: 0;
  color: #6d6d6d;
}
.files td div {
  display: flex;
  align-items: center;
  height: 42px;
  padding-left: 12px;
  border: 0 solid #d9d9d9;
  white-space: nowrap;
}
.files td.name div {
  gap: 10px;
  margin-left: 28px;
  border-left: 2px solid transparent;
  color: #000;
  padding-left: 10px;
}
.files td.date {
  font-size: 22px;
}
.files td.size div {
  justify-content: flex-end;
  margin-right: 8px;
  padding-right: 8px;
}
.files .selected td div {
  height: 44px;
  padding-bottom: 2px;
  border-top-width: 2px;
  border-bottom-width: 2px;
  background: #f1f1f1;
}
.files .selected td.name div {
  border-color: #d9d9d9;
}
.files .selected td.size div {
  padding-right: 6px;
  border-right-width: 2px;
}
.status {
  display: flex;
  align-items: center;
  height: 46px;
  padding: 0 8px 0 28px;
  color: #1e395b;
  font-size: 22px;
}
.status span {
  margin-right: 15px;
}
.status .count {
  margin-right: 43px;
}
.view {
  display: flex;
  align-items: center;
  justify-content: center;
  width: 44px;
  height: 46px;
}
.view.on {
  margin-left: auto;
  border: 2px solid #2a6496;
  background: #c3e4f7;
}

.dialog {
  position: absolute;
  top: 742px;
  left: 930px;
  width: 754px;
  border: 2px solid #2b2d30;
  background: #66c9ea;
  font-family: "Liberation Sans", Arial, sans-serif;
  font-size: 21px;
  line-height: 28px;
}
.dl-title {
  display: grid;
  grid-template-columns: 1fr auto 1fr;
  align-items: center;
  height: 58px;
  padding: 0 10px 0 22px;
}
.dl-title h2 {
  font-family: "Open Sans", "Noto Sans", sans-serif;
}
.close {
  display: flex;
  align-items: center;
  align-self: start;
  justify-self: end;
  justify-content: center;
  width: 68px;
  height: 42px;
  border: 2px solid #5d3a42;
  border-top: 0;
  background: #c35a50;
}
.dl-body {
  margin: 0 14px 12px;
  padding: 14px 12px 16px;
  border: solid #7fadc6;
  border-width: 2px 0;
  background: #efefef;
}
.tabs {
  display: flex;
  align-items: flex-end;
  height: 40px;
  padding-left: 4px;
}
.tabs button {
  height: 36px;
  padding: 2px 9px 0;
  border: 2px solid #898c95;
  border-bottom: 0;
  background: #ececec;
}
.tabs button + button {
  margin-left: -2px;
}
.tabs button.active {
  position: relative;
  align-self: flex-start;
  height: 42px;
  padding: 0 14px 4px;
  background: #fff;
}
.pane {
  min-height: 828px;
  padding: 24px 26px 0 28px;
  border: 2px solid #898c95;
  background: #fff;
}
.object {
  display: flex;
}
.object label {
  width: 157px;
}
.object input {
  flex: 1;
  min-width: 0;
  height: 28px;
  outline: 0;
  font-size: 22px;
}
.caption-group {
  margin-top: 32px;
}
.principals {
  height: 192px;
  margin-top: 4px;
  padding: 2px 2px 0 10px;
  border: 2px solid #828790;
}
.principals li {
  display: flex;
  height: 34px;
}
.principals span {
  flex: 1;
  padding-left: 4px;
  line-height: 36px;
}
.principals .active span {
  background: #3399ff;
  color: #fff;
}
.action {
  display: flex;
  justify-content: space-between;
  margin-top: 16px;
  padding-right: 4px;
  line-height: 25px;
}
.action.edit {
  margin-top: 14px;
}
.push {
  width: 146px;
  height: 42px;
  border: 2px solid #707070;
  background: #dddddd;
}
.push.wide {
  width: 176px;
}
.push.default {
  border-color: #3c7fb1;
}
.push:disabled {
  border-color: #adb2b5;
  background: #f4f4f4;
  color: #838383;
}
.perm-head {
  display: flex;
  margin-top: 28px;
}
.perm-head span:first-child {
  flex: 1;
}
.perm-head .col {
  width: 100px;
}
.perm-head .col:nth-child(2) {
  width: 122px;
}
.perm-box {
  height: 250px;
  margin-top: 4px;
  padding: 6px 0 0 22px;
  border: 2px solid #646464;
}
.perm-box table {
  width: 100%;
  border-spacing: 0;
}
.perm-box th {
  height: 36px;
  padding: 0;
  font-weight: 400;
  text-align: left;
}
.perm-box td {
  width: 122px;
  padding: 0;
}
.perm-box td:last-child {
  width: 96px;
}
.buttons {
  display: flex;
  justify-content: flex-end;
  gap: 16px;
  margin-top: 14px;
  padding-right: 2px;
}

.taskbar {
  display: flex;
  align-items: center;
  height: 80px;
  border: 2px solid #56575a;
  border-right: 0;
  background: #66c9ea;
}
.taskbar button {
  display: flex;
  align-items: center;
  justify-content: center;
  height: 76px;
}
.start {
  width: 96px;
}
.grip {
  width: 18px;
  height: 62px;
  margin-left: 2px;
  background: radial-gradient(circle at 2px 3px, #22505f 2px, transparent 2px) 0 0 / 6px 8px;
}
.server {
  width: 132px;
  margin-left: 10px;
}
.shell {
  width: 122px;
}
.taskbar .running {
  width: 109px;
  border: solid #2f5a70;
  border-width: 0 2px;
  background: #a2d8f4;
}
.stack {
  width: 11px;
  height: 76px;
  border-right: 2px solid #2f5a70;
  background: #a2d8f4;
}
.app {
  width: 126px;
}
.taskbar .open {
  width: 120px;
  border: solid #4f8298;
  border-width: 0 2px;
  background: #78d0ec;
}
.tray {
  display: flex;
  align-items: center;
  margin-left: auto;
  padding-right: 34px;
}
.keys {
  margin: 0 28px 0 22px;
}
.reveal {
  margin-right: 10px;
}
.status-icon {
  margin-left: 16px;
}
.lang {
  margin: 0 32px 0 28px;
}
.clock {
  display: flex;
  flex-direction: column;
  align-items: center;
  font-size: 22px;
  line-height: 34px;
}
</style>
